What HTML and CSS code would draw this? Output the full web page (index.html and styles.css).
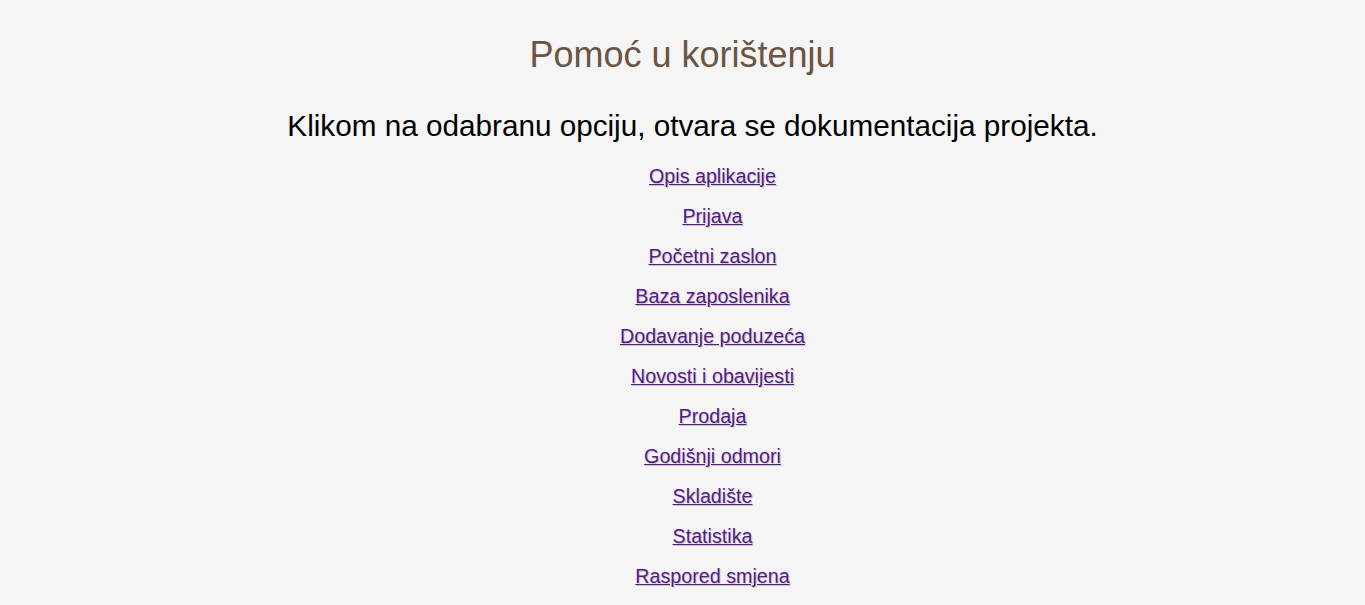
FILE: index.html
```html
<!DOCTYPE html>
<html lang="hr">
<head>
<meta charset="utf-8">
<title>Pomoć u korištenju</title>
<link rel="stylesheet" href="styles.css">
</head>
<body>
<main class="help">
  <h1 class="help-title">Pomoć u korištenju</h1>
  <h2 class="help-sub">Klikom na odabranu opciju, otvara se dokumentacija projekta.</h2>
  <nav class="help-links">
    <a href="#opis">Opis aplikacije</a>
    <a href="#prijava">Prijava</a>
    <a href="#pocetni">Početni zaslon</a>
    <a href="#baza">Baza zaposlenika</a>
    <a href="#poduzeca">Dodavanje poduzeća</a>
    <a href="#novosti">Novosti i obavijesti</a>
    <a href="#prodaja">Prodaja</a>
    <a href="#odmori">Godišnji odmori</a>
    <a href="#skladiste">Skladište</a>
    <a href="#statistika">Statistika</a>
    <a href="#smjene">Raspored smjena</a>
  </nav>
</main>
</body>
</html>
```
FILE: styles.css
```css
html, body {
  margin: 0;
  padding: 0;
  background: #f5f5f5;
}
body {
  font-family: "Liberation Sans", Arial, sans-serif;
}
.help {
  display: flex;
  flex-direction: column;
  align-items: center;
  padding-top: 34px;
}
.help-title {
  margin: 0;
  font-size: 36px;
  font-weight: normal;
  line-height: 42px;
  color: #6b5443;
}
.help-sub {
  margin: 33px 0 0;
  padding-left: 20px;
  font-size: 29.7px;
  font-weight: normal;
  line-height: 34px;
  color: #000;
}
.help-links {
  margin-top: 22px;
  padding-left: 60px;
  display: flex;
  flex-direction: column;
  align-items: center;
  gap: 17px;
}
.help-links a {
  font-size: 19.7px;
  line-height: 23px;
  color: #551a8b;
  text-decoration: underline;
  text-shadow: 1px 1px 1px rgba(0, 0, 0, 0.2);
}
```
